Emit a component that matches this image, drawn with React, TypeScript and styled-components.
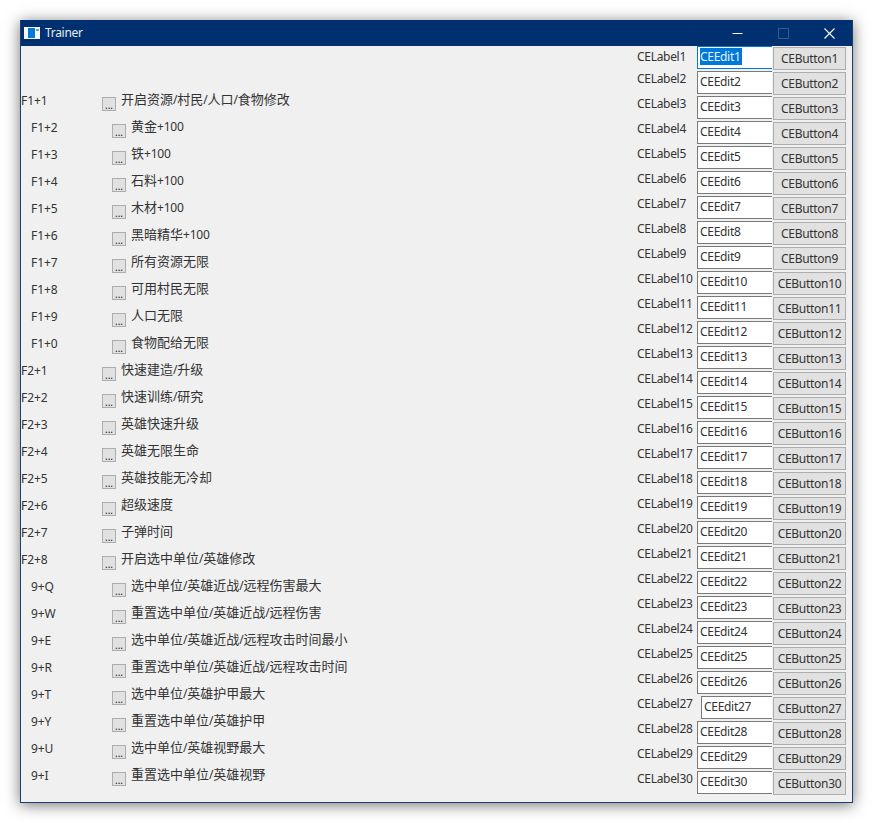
import styled, { createGlobalStyle } from 'styled-components';

const KEYS = [
  { key: 'F1+1', text: '开启资源/村民/人口/食物修改', sub: false },
  { key: 'F1+2', text: '黄金+100', sub: true },
  { key: 'F1+3', text: '铁+100', sub: true },
  { key: 'F1+4', text: '石料+100', sub: true },
  { key: 'F1+5', text: '木材+100', sub: true },
  { key: 'F1+6', text: '黑暗精华+100', sub: true },
  { key: 'F1+7', text: '所有资源无限', sub: true },
  { key: 'F1+8', text: '可用村民无限', sub: true },
  { key: 'F1+9', text: '人口无限', sub: true },
  { key: 'F1+0', text: '食物配给无限', sub: true },
  { key: 'F2+1', text: '快速建造/升级', sub: false },
  { key: 'F2+2', text: '快速训练/研究', sub: false },
  { key: 'F2+3', text: '英雄快速升级', sub: false },
  { key: 'F2+4', text: '英雄无限生命', sub: false },
  { key: 'F2+5', text: '英雄技能无冷却', sub: false },
  { key: 'F2+6', text: '超级速度', sub: false },
  { key: 'F2+7', text: '子弹时间', sub: false },
  { key: 'F2+8', text: '开启选中单位/英雄修改', sub: false },
  { key: '9+Q', text: '选中单位/英雄近战/远程伤害最大', sub: true },
  { key: '9+W', text: '重置选中单位/英雄近战/远程伤害', sub: true },
  { key: '9+E', text: '选中单位/英雄近战/远程攻击时间最小', sub: true },
  { key: '9+R', text: '重置选中单位/英雄近战/远程攻击时间', sub: true },
  { key: '9+T', text: '选中单位/英雄护甲最大', sub: true },
  { key: '9+Y', text: '重置选中单位/英雄护甲', sub: true },
  { key: '9+U', text: '选中单位/英雄视野最大', sub: true },
  { key: '9+I', text: '重置选中单位/英雄视野', sub: true },
];

const NUMBERS = Array.from({ length: 30 }, (_, i) => i + 1);

// 中文部分字号比拉丁字符大一点
const splitCjk = (text: string) =>
  text.split(/([\u4e00-\u9fff]+)/).map((part, i) => (i % 2 === 1 ? <Cjk key={i}>{part}</Cjk> : part));

export default function App() {
  return (
    <Page>
      <GlobalStyle />
      <Window>
        <TitleBar>
          <AppIcon viewBox="0 0 16 12">
            <rect width="16" height="12" fill="#f4f6f8" />
            <rect x="4" y="1" width="7" height="10" fill="#0a78d7" />
            <rect x="12" y="2" width="3" height="2" fill="#8a9bb0" />
          </AppIcon>
          <Title>Trainer</Title>
          <Controls>
            <Control>
              <svg width="11" height="11" viewBox="0 0 11 11">
                <path d="M0.5 5.5H10.5" stroke="#fff" strokeWidth="1" />
              </svg>
            </Control>
            <Control>
              <svg width="11" height="11" viewBox="0 0 11 11">
                <rect x="0.5" y="0.5" width="10" height="10" fill="none" stroke="#2f5a94" strokeWidth="1" />
              </svg>
            </Control>
            <Control>
              <svg width="11" height="11" viewBox="0 0 11 11">
                <path d="M0.5 0.5L10.5 10.5M10.5 0.5L0.5 10.5" stroke="#fff" strokeWidth="1.1" />
              </svg>
            </Control>
          </Controls>
        </TitleBar>
        <Body>
          <HotkeyList>
            {KEYS.map((item) => (
              <HotkeyRow key={item.key} $sub={item.sub}>
                <KeyName>{item.key}</KeyName>
                <DotsButton>...</DotsButton>
                <HotkeyText>{splitCjk(item.text)}</HotkeyText>
              </HotkeyRow>
            ))}
          </HotkeyList>
          <FieldList>
            {NUMBERS.map((n) => (
              <FieldRow key={n}>
                <FieldLabel $first={n === 1}>CELabel{n}</FieldLabel>
                <EditCell>
                  <Edit $focused={n === 1} $shifted={n === 27}>
                    {n === 1 ? <Selected>CEEdit1</Selected> : `CEEdit${n}`}
                  </Edit>
                </EditCell>
                <FieldButton>CEButton{n}</FieldButton>
              </FieldRow>
            ))}
          </FieldList>
        </Body>
      </Window>
    </Page>
  );
}

const GlobalStyle = createGlobalStyle`
  html, body {
    margin: 0;
    padding: 0;
    background: #fff;
  }
`;

const Page = styled.div`
  padding: 20px 19px 20px 20px;
  font-family: "Noto Sans", "Noto Sans CJK SC", sans-serif;
  font-size: 12px;
  color: #222;
`;

const Window = styled.div`
  width: 833px;
  height: 783px;
  box-sizing: border-box;
  border: 1px solid #1c3f72;
  border-top: none;
  background: #f0f0f0;
  display: flex;
  flex-direction: column;
  box-shadow: 0 2px 14px rgba(0, 0, 0, 0.55);
`;

const TitleBar = styled.div`
  height: 26px;
  flex-shrink: 0;
  background: #003070;
  display: flex;
  align-items: center;
  padding-left: 3px;
`;

const AppIcon = styled.svg`
  width: 16px;
  height: 12px;
  margin-right: 5px;
`;

const Title = styled.div`
  color: #e8edf4;
  letter-spacing: -0.3px;
  margin-top: -1px;
`;

const Controls = styled.div`
  margin-left: auto;
  display: flex;
`;

const Control = styled.div`
  width: 46px;
  height: 26px;
  display: flex;
  align-items: center;
  justify-content: center;
`;

const Body = styled.div`
  flex: 1;
  display: flex;
  justify-content: space-between;
`;

const HotkeyList = styled.div`
  padding-top: 41px;
  display: flex;
  flex-direction: column;
`;

const HotkeyRow = styled.div<{ $sub: boolean }>`
  height: 27px;
  display: flex;
  padding-left: ${(props) => (props.$sub ? '10px' : '0')};
`;

const KeyName = styled.div`
  width: 81px;
  line-height: 27px;
  height: 27px;
  white-space: nowrap;
  letter-spacing: -0.1px;
  color: #333;
`;

const DotsButton = styled.div`
  width: 14px;
  height: 14px;
  margin-top: 10px;
  box-sizing: border-box;
  border: 1px solid #adadad;
  background: #e1e1e1;
  font-size: 10px;
  line-height: 14px;
  text-align: center;
  margin-right: 5px;
`;

const HotkeyText = styled.div`
  line-height: 25px;
  height: 27px;
  white-space: nowrap;
  letter-spacing: -0.2px;
  color: #333;
`;

const Cjk = styled.span`
  font-size: 13px;
  letter-spacing: 0;
`;

const FieldList = styled.div`
  display: flex;
  flex-direction: column;
  padding-right: 6px;
`;

const FieldRow = styled.div`
  height: 25px;
  display: flex;
  letter-spacing: -0.3px;
  color: #333;
`;

const FieldLabel = styled.div<{ $first: boolean }>`
  width: 60px;
  line-height: 16px;
  padding-top: ${(props) => (props.$first ? '3px' : '0')};
  white-space: nowrap;
`;

const EditCell = styled.div`
  width: 76px;
  display: flex;
  justify-content: flex-end;
`;

const Edit = styled.div<{ $focused: boolean; $shifted: boolean }>`
  width: ${(props) => (props.$shifted ? '71px' : '75px')};
  height: 23px;
  margin-right: 1px;
  box-sizing: border-box;
  background: #fff;
  border: 1px solid ${(props) => (props.$focused ? '#0078d7' : '#7a7a7a')};
  border-right: none;
  padding-left: 2px;
  line-height: 20px;
  white-space: nowrap;
`;

const Selected = styled.span`
  background: #0078d7;
  color: #e8f2fb;
  padding-right: 1px;
`;

const FieldButton = styled.div`
  width: 73px;
  height: 23px;
  margin-top: 1px;
  box-sizing: border-box;
  border: 1px solid #adadad;
  background: #e1e1e1;
  text-align: center;
  line-height: 21px;
  white-space: nowrap;
`;
